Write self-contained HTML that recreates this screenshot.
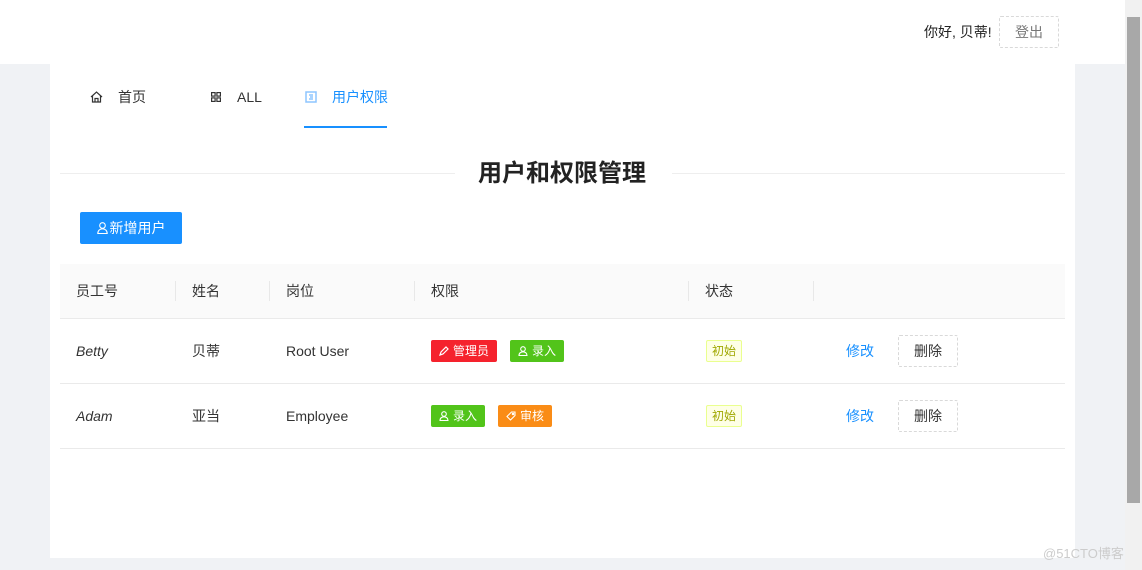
<!DOCTYPE html>
<html><head><meta charset="utf-8"><style>
*{box-sizing:border-box;margin:0;padding:0}
body{width:1142px;height:570px;overflow:hidden;background:#f0f2f5;font-family:"Liberation Sans","Noto Sans CJK SC",sans-serif;font-size:14px;line-height:20px;color:#333;position:relative}
.hdr{position:absolute;left:0;top:0;width:1125px;height:64px;background:#fff}
.sb{position:absolute;right:0;top:0;width:17px;height:570px;background:#f1f1f1}
.thumb{position:absolute;right:2px;top:17px;width:13px;height:486px;background:#a8a8a8}
.main{position:absolute;left:50px;top:64px;width:1025px;height:494px;background:#fff}
.a{position:absolute;white-space:nowrap}
.tag{position:absolute;height:22px;line-height:22px;color:#fff;font-size:12px;border-radius:2px;padding:0 8px;display:flex;align-items:center;gap:4px}
.tag svg{width:10px;height:10px}
.st{position:absolute;height:22px;line-height:20px;font-size:12px;color:#a0a800;background:#feffe6;border:1px solid #eaff8f;border-radius:2px;padding:0 5px;left:706px}
.del{position:absolute;left:898px;width:60px;height:32px;border:1px dashed #d9d9d9;border-radius:2px;text-align:center;line-height:30px;color:#333}
.line{position:absolute;left:60px;width:1005px;height:1px;background:#eaeaea}
.sep{position:absolute;top:281px;width:1px;height:20px;background:#e8e8e8}
</style></head><body>
<div class="hdr"></div>
<div class="a" style="left:924px;top:22px;color:#222">你好, 贝蒂!</div>
<div class="a" style="left:999px;top:16px;width:60px;height:32px;border:1px dashed #d9d9d9;border-radius:2px;text-align:center;line-height:30px;color:#777">登出</div>
<div class="main"></div>
<svg class="a" style="left:90px;top:91px" width="13" height="12" viewBox="0 0 13 12" fill="none" stroke="#333" stroke-width="1.2"><path d="M1 6L6.5 1L12 6M2.5 5V11H10.5V5M5 11V7.5H8V11"/></svg>
<div class="a" style="left:118px;top:87px">首页</div>
<svg class="a" style="left:211px;top:92px" width="10" height="10" viewBox="0 0 10 10" fill="none" stroke="#333" stroke-width="1.2"><rect x="0.6" y="0.6" width="3.5" height="3.5"/><rect x="5.9" y="0.6" width="3.5" height="3.5"/><rect x="0.6" y="5.9" width="3.5" height="3.5"/><rect x="5.9" y="5.9" width="3.5" height="3.5"/></svg>
<div class="a" style="left:237px;top:87px">ALL</div>
<svg class="a" style="left:305px;top:91px" width="12" height="12" viewBox="0 0 12 12" fill="none" stroke="#8ec5ff" stroke-width="1.5"><rect x="1" y="1" width="10" height="10"/><path d="M4 4H8M5 6H8M4 8H8"/></svg>
<div class="a" style="left:332px;top:87px;color:#1890ff">用户权限</div>
<div class="a" style="left:304px;top:126px;width:83px;height:2px;background:#1890ff"></div>
<div class="a" style="left:60px;top:173px;width:395px;height:1px;background:#eee"></div>
<div class="a" style="left:672px;top:173px;width:393px;height:1px;background:#eee"></div>
<div class="a" style="left:478px;top:158px;font-size:24px;line-height:32px;font-weight:bold;color:#222">用户和权限管理</div>
<div class="a" style="left:80px;top:212px;width:102px;height:32px;background:#1890ff;border-radius:2px;color:#fff;line-height:32px;display:flex;align-items:center;justify-content:center;gap:2px"><svg width="11" height="12" viewBox="0 0 11 12" fill="none" stroke="#fff" stroke-width="1.1"><circle cx="5.5" cy="3.5" r="2.8"/><path d="M0.8 11.5C0.8 8.5 3 6.8 5.5 6.8S10.2 8.5 10.2 11.5Z"/></svg>新增用户</div>
<div class="a" style="left:60px;top:264px;width:1005px;height:55px;background:#fafafa"></div>
<div class="line" style="top:318px"></div>
<div class="sep" style="left:175px"></div><div class="sep" style="left:269px"></div><div class="sep" style="left:414px"></div><div class="sep" style="left:688px"></div><div class="sep" style="left:813px"></div>
<div class="a" style="left:76px;top:281px">员工号</div>
<div class="a" style="left:192px;top:281px">姓名</div>
<div class="a" style="left:286px;top:281px">岗位</div>
<div class="a" style="left:431px;top:281px">权限</div>
<div class="a" style="left:705px;top:281px">状态</div>
<div class="a" style="left:76px;top:341px;font-style:italic">Betty</div>
<div class="a" style="left:192px;top:341px">贝蒂</div>
<div class="a" style="left:286px;top:341px">Root User</div>
<div class="tag" style="left:431px;top:340px;background:#f5222d"><svg viewBox="0 0 10 10" fill="none" stroke="#fff" stroke-width="1.2"><path d="M1 9L2 6L7 1L9 3L4 8Z"/></svg>管理员</div>
<div class="tag" style="left:510px;top:340px;background:#52c41a"><svg viewBox="0 0 10 10" fill="none" stroke="#fff" stroke-width="1.1"><circle cx="5" cy="3" r="2.3"/><path d="M1 9.5C1 7 3 5.8 5 5.8S9 7 9 9.5Z"/></svg>录入</div>
<div class="st" style="top:340px">初始</div>
<div class="a" style="left:846px;top:341px;color:#1890ff">修改</div>
<div class="del" style="top:335px">删除</div>
<div class="line" style="top:383px"></div>
<div class="a" style="left:76px;top:406px;font-style:italic">Adam</div>
<div class="a" style="left:192px;top:406px">亚当</div>
<div class="a" style="left:286px;top:406px">Employee</div>
<div class="tag" style="left:431px;top:405px;background:#52c41a"><svg viewBox="0 0 10 10" fill="none" stroke="#fff" stroke-width="1.1"><circle cx="5" cy="3" r="2.3"/><path d="M1 9.5C1 7 3 5.8 5 5.8S9 7 9 9.5Z"/></svg>录入</div>
<div class="tag" style="left:498px;top:405px;background:#fa8c16"><svg viewBox="0 0 10 10" fill="none" stroke="#fff" stroke-width="1.1"><path d="M5.5 1H9V4.5L4.5 9L1 5.5Z"/><circle cx="7" cy="3" r="0.7"/></svg>审核</div>
<div class="st" style="top:405px">初始</div>
<div class="a" style="left:846px;top:406px;color:#1890ff">修改</div>
<div class="del" style="top:400px">删除</div>
<div class="line" style="top:448px"></div>
<div class="a" style="left:1043px;top:544px;color:#ccc;font-size:13px">@51CTO博客</div>
<div class="sb"><div class="thumb"></div></div>
</body></html>
